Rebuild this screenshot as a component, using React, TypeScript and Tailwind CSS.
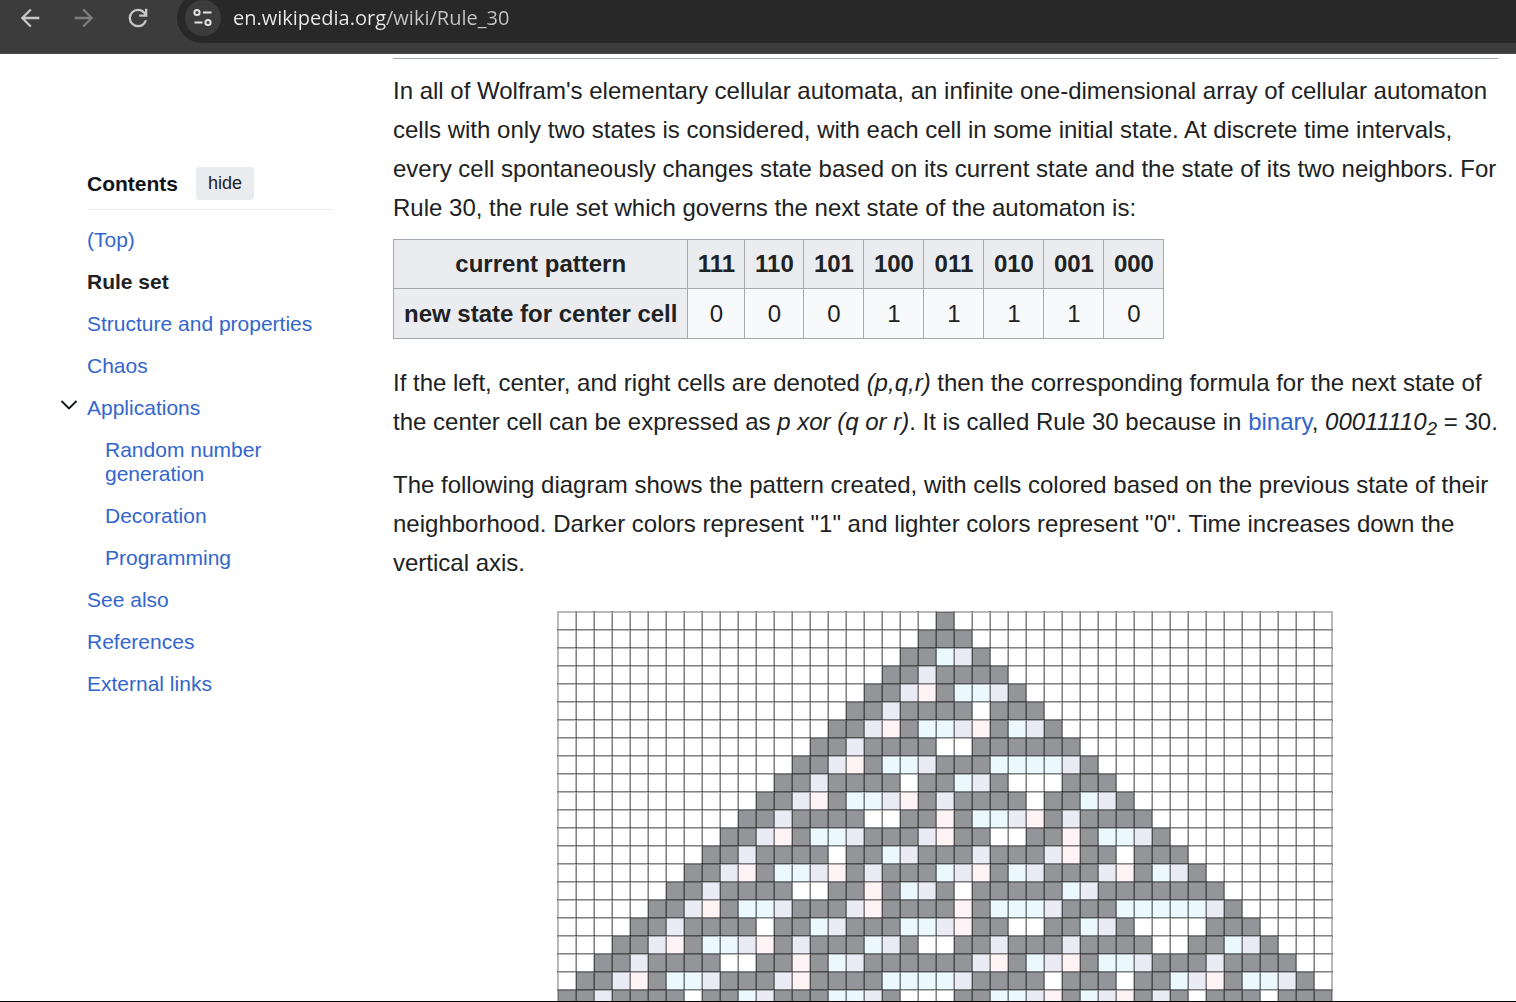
import React from "react";

const COLS = 43;
const ROWS = 22;
const SIZE = 18;

const FILL: Record<string, string> = {
  "111": "#ebf8fe",
  "110": "#ebebf5",
  "101": "#fff3f6",
  "000": "#ffffff",
};

// Cells are listed right to left within each row, so the left neighbour's outline is painted last.
function buildCells() {
  const pad = 30;
  let row = Array.from({ length: COLS + pad * 2 }, (_, i) => (i === pad + 21 ? 1 : 0));
  const out: { x: number; y: number; fill: string }[] = [];
  for (let i = COLS - 1; i >= 0; i--) {
    out.push({ x: i, y: 0, fill: row[i + pad] ? "#949599" : "#ffffff" });
  }
  for (let y = 1; y < ROWS; y++) {
    const next = row.map((c, i) => (row[i - 1] ?? 0) ^ (c | (row[i + 1] ?? 0)));
    for (let i = COLS - 1; i >= 0; i--) {
      const k = i + pad;
      const key = `${row[k - 1]}${row[k]}${row[k + 1]}`;
      out.push({ x: i, y, fill: next[k] ? "#949599" : FILL[key] });
    }
    row = next;
  }
  return out;
}

const cells = buildCells();

function Diagram() {
  return (
    <svg
      role="img"
      aria-label="Rule 30 cellular automaton pattern"
      width={777}
      height={398}
      viewBox="0 0 777 398"
      className="mx-auto block shrink-0"
    >
      {cells.map((c) => (
        <rect
          key={`${c.x}-${c.y}`}
          x={1 + c.x * SIZE}
          y={1 + c.y * SIZE}
          width={SIZE}
          height={SIZE}
          fill={c.fill}
          stroke="#000"
          strokeOpacity={0.28}
          strokeWidth={2}
        />
      ))}
    </svg>
  );
}

function Toolbar() {
  return (
    <header className="flex h-[54px] shrink-0 items-start overflow-hidden border-b border-[#4a484b] bg-[#3c3c3c]">
      <div className="flex h-9 w-[177px] shrink-0 items-center gap-[26px] pl-4">
        <button aria-label="Back" className="text-[#c7c7c7]">
          <svg width="28" height="28" viewBox="0 0 24 24" fill="currentColor">
            <path d="M20 11H7.830l5.590-5.590L12 4l-8 8 8 8 1.410-1.410L7.830 13H20v-2z" />
          </svg>
        </button>
        <button aria-label="Forward" className="text-[#7d7d7d]">
          <svg width="28" height="28" viewBox="0 0 24 24" fill="currentColor">
            <path d="M12 4l-1.410 1.410L16.170 11H4v2h12.170l-5.580 5.590L12 20l8-8z" />
          </svg>
        </button>
        <button aria-label="Reload" className="text-[#c7c7c7]">
          <svg width="28" height="28" viewBox="0 -960 960 960" fill="currentColor">
            <path d="M480-160q-134 0-227-93t-93-227q0-134 93-227t227-93q69 0 132 28.500T720-690v-110h80v280H520v-80h168q-32-56-87.500-88T480-720q-100 0-170 70t-70 170q0 100 70 170t170 70q77 0 139-44t87-116h84q-28 106-114 173t-196 67Z" />
          </svg>
        </button>
      </div>
      <div className="-mt-[7px] flex h-[50px] min-w-0 flex-1 items-center rounded-l-full bg-[#282828] pl-2">
        <button
          aria-label="View site information"
          className="flex size-9 shrink-0 items-center justify-center rounded-full bg-[#3c3c3c] text-[#e3e3e3]"
        >
          <svg width="20" height="20" viewBox="0 0 20 20" fill="none" stroke="currentColor" strokeWidth="2">
            <circle cx="4" cy="4.500" r="2.600" />
            <path d="M10 4.500H18.500M1.500 14.500H9.500" />
            <circle cx="15" cy="14.500" r="2.600" />
          </svg>
        </button>
        <input
          aria-label="Address"
          type="text"
          defaultValue="en.wikipedia.org/wiki/Rule_30"
          className="ml-3 h-9 min-w-0 flex-1 bg-[linear-gradient(90deg,#ececec_153px,#c7c7c7_153px)] bg-clip-text font-['Open_Sans',sans-serif] text-[20px] leading-9 text-transparent outline-none"
        />
      </div>
    </header>
  );
}

const link = "text-[#3366cc] hover:underline";

function Contents() {
  return (
    <nav aria-label="Contents" className="w-[333px] shrink-0 pt-[113px] pl-[87px] text-[21px] leading-6">
      <div className="flex h-[43px] items-start border-b border-[#eaecf0]">
        <h2 className="leading-[34px] font-bold text-[#101418]">Contents</h2>
        <button className="ml-[18px] h-[33px] rounded-[3px] bg-[#eaecf0] px-3 pb-[2px] text-[18px] leading-[30px] text-[#202122]">
          hide
        </button>
      </div>
      <ul className="pt-[9px]">
        <li className="py-[9px]"><a href="#top" className={link}>(Top)</a></li>
        <li className="py-[9px]"><a href="#rule" className="font-bold text-[#202122]">Rule set</a></li>
        <li className="py-[9px]"><a href="#structure" className={link}>Structure and properties</a></li>
        <li className="py-[9px]"><a href="#chaos" className={link}>Chaos</a></li>
        <li>
          <div className="-ml-7 flex items-start py-[9px]">
            <button aria-label="Toggle Applications subsection" className="mr-2 w-5 text-[#101418]">
              <svg width="20" height="20" viewBox="0 0 20 20" fill="none" stroke="currentColor" strokeWidth="1.800">
                <path d="M2.500 5L10 12.500L17.500 5" />
              </svg>
            </button>
            <a href="#applications" className={link}>Applications</a>
          </div>
          <ul className="pl-[18px]">
            <li className="py-[9px]"><a href="#random" className={link}>Random number generation</a></li>
            <li className="py-[9px]"><a href="#decoration" className={link}>Decoration</a></li>
            <li className="py-[9px]"><a href="#programming" className={link}>Programming</a></li>
          </ul>
        </li>
        <li className="py-[9px]"><a href="#see" className={link}>See also</a></li>
        <li className="py-[9px]"><a href="#references" className={link}>References</a></li>
        <li className="py-[9px]"><a href="#external" className={link}>External links</a></li>
      </ul>
    </nav>
  );
}

const patterns = ["111", "110", "101", "100", "011", "010", "001", "000"];
const states = [0, 0, 0, 1, 1, 1, 1, 0];

function RuleTable() {
  return (
    <table className="mt-3 border-collapse bg-[#f8f9fa] text-center">
      <tbody>
        <tr>
          <th scope="row" className="border border-[#a2a9b1] bg-[#eaecf0] px-[10px] pt-1 pb-[5px]">current pattern</th>
          {patterns.map((p) => (
            <th
              key={p}
              scope="col"
              className="w-[60px] border border-[#a2a9b1] bg-[#eaecf0] px-2 pt-1 pb-[5px] nth-2:w-[57px] nth-3:w-[59px]"
            >
              {p}
            </th>
          ))}
        </tr>
        <tr>
          <th scope="row" className="border border-[#a2a9b1] bg-[#eaecf0] px-[10px] py-[5px] whitespace-nowrap">
            new state for center cell
          </th>
          {states.map((s, i) => (
            <td key={patterns[i]} className="border border-[#a2a9b1] px-2 py-[5px]">{s}</td>
          ))}
        </tr>
      </tbody>
    </table>
  );
}

export default function App() {
  return (
    <div className="flex h-screen flex-col overflow-hidden border-b border-black bg-white font-['Liberation_Sans',Arial,sans-serif]">
      <Toolbar />
      <div className="flex min-h-0 flex-1 overflow-hidden">
        <Contents />
        <main className="ml-[60px] min-w-0 flex-1 pt-1 pr-[18px] text-[24px] leading-[39px] text-[#202122]">
          <hr className="border-[#a2a9b1]" />
          <p className="mt-3">
            In all of Wolfram's elementary cellular automata, an infinite one-dimensional array of cellular automaton
            cells with only two states is considered, with each cell in some initial state. At discrete time intervals,
            every cell spontaneously changes state based on its current state and the state of its two neighbors. For
            Rule 30, the rule set which governs the next state of the automaton is:
          </p>
          <RuleTable />
          <p className="mt-6">
            If the left, center, and right cells are denoted <i>(p,q,r)</i> then the corresponding formula for the next
            state of the center cell can be expressed as <i>p xor (q or r)</i>. It is called Rule 30 because in{" "}
            <a href="#binary" className={link}>binary</a>,{" "}
            <i>00011110<sub className="text-[19px]">2</sub></i> = 30.
          </p>
          <p className="mt-6">
            The following diagram shows the pattern created, with cells colored based on the previous state of their
            neighborhood. Darker colors represent "1" and lighter colors represent "0". Time increases down the vertical
            axis.
          </p>
          <div className="mt-[29px]">
            <Diagram />
          </div>
        </main>
      </div>
    </div>
  );
}
